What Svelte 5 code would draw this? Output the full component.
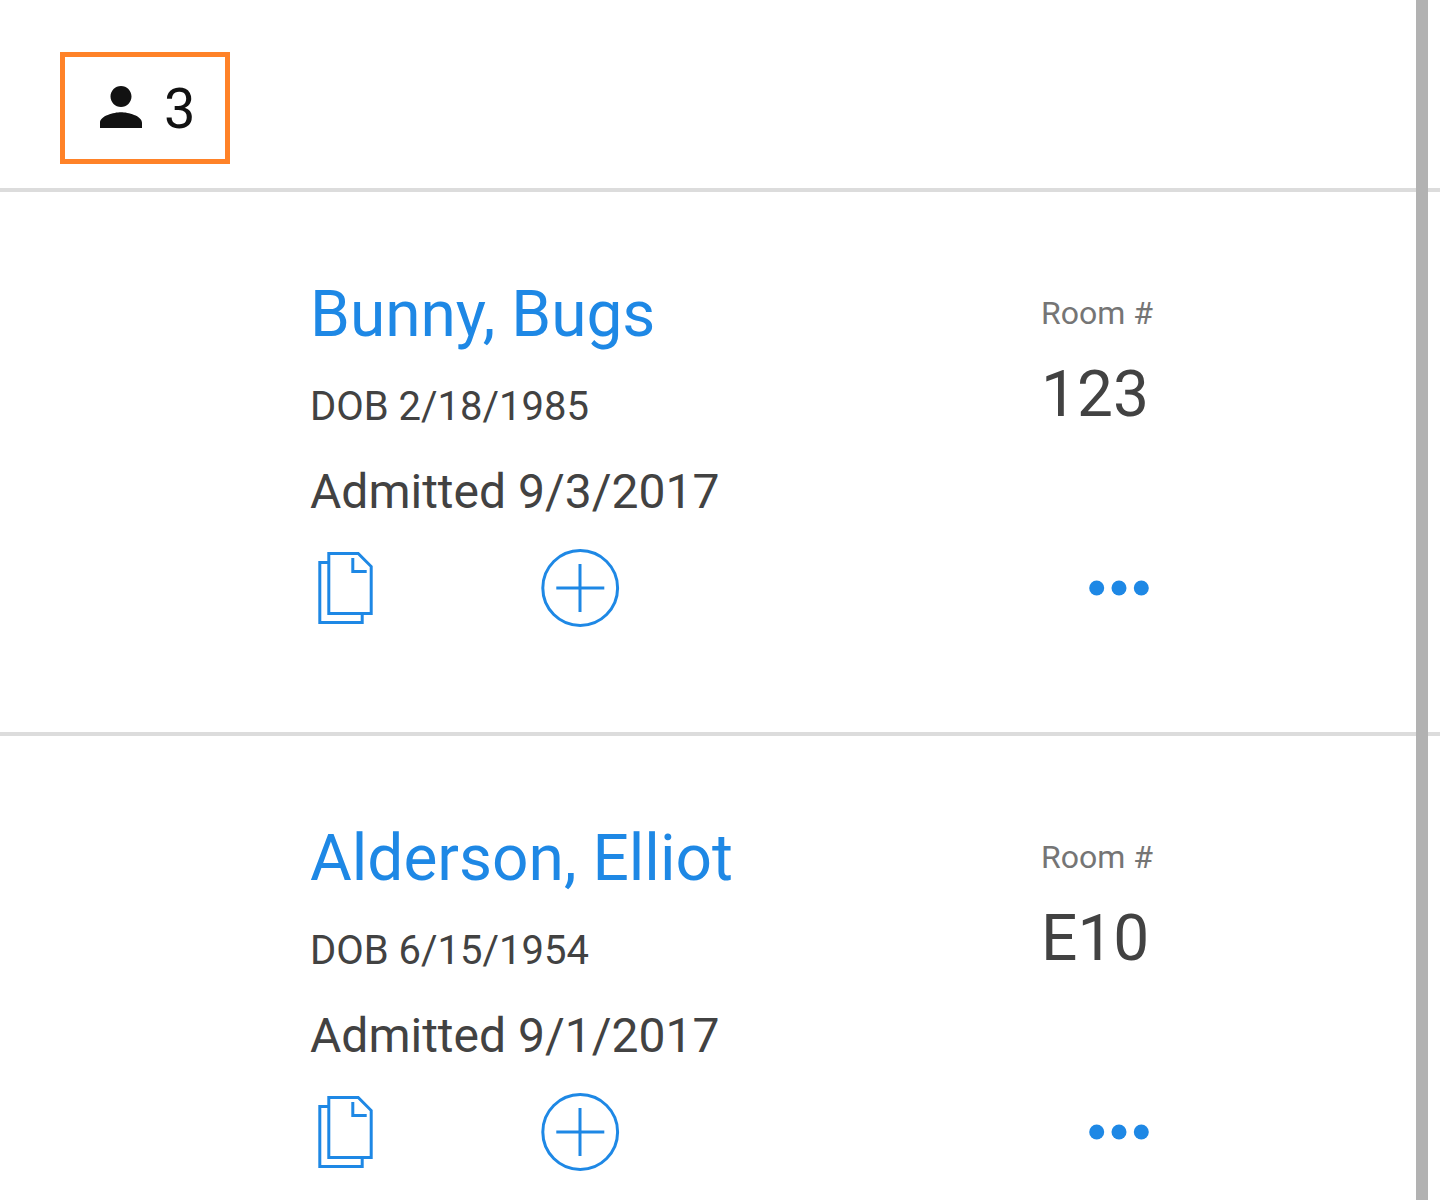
<script lang="ts">
	type Patient = {
		id: number;
		name: string;
		dob: string;
		admitted: string;
		room: string;
	};

	const patients: Patient[] = [
		{ id: 1, name: 'Bunny, Bugs', dob: '2/18/1985', admitted: '9/3/2017', room: '123' },
		{ id: 2, name: 'Alderson, Elliot', dob: '6/15/1954', admitted: '9/1/2017', room: 'E10' }
	];

	const patientCount = 3;
</script>

<main class="screen">
	<header class="toolbar">
		<button class="count" aria-label="Patients">
			<svg class="person" viewBox="4 4 16 16" aria-hidden="true">
				<path
					d="M12 12c2.21 0 4-1.79 4-4s-1.79-4-4-4-4 1.79-4 4 1.79 4 4 4zm0 2c-2.67 0-8 1.34-8 4v2h16v-2c0-2.66-5.33-4-8-4z"
				/>
			</svg>
			<span>{patientCount}</span>
		</button>
	</header>

	<ul class="patients">
		{#each patients as patient (patient.id)}
			<li class="patient">
				<div class="summary">
					<div class="details">
						<a class="name" href={`#patient-${patient.id}`}>{patient.name}</a>
						<p class="dob">DOB {patient.dob}</p>
						<p class="admitted">Admitted {patient.admitted}</p>
					</div>
					<dl class="room">
						<dt>Room #</dt>
						<dd>{patient.room}</dd>
					</dl>
				</div>

				<div class="actions">
					<button class="action" aria-label="Documents">
						<svg width="56" height="72" viewBox="0 0 56 72" aria-hidden="true">
							<path d="M10.8 10.5H1.8V70.4H44.2V61.5" />
							<path d="M10.8 1.5H40.2L53.2 14.5V61.5H10.8Z" />
							<path d="M34.8 6V19.5H48.7" />
						</svg>
					</button>
					<button class="action add" aria-label="Add">
						<svg width="80" height="80" viewBox="0 0 80 80" aria-hidden="true">
							<circle cx="40.2" cy="40" r="37.4" />
							<path d="M40 16V64M16.3 40H64.3" />
						</svg>
					</button>
					<button class="action more" aria-label="More">
						<svg width="62" height="16" viewBox="0 0 62 16" aria-hidden="true">
							<circle cx="8.7" cy="8" r="7.5" />
							<circle cx="31" cy="8" r="7.5" />
							<circle cx="53.3" cy="8" r="7.5" />
						</svg>
					</button>
				</div>
			</li>
		{/each}
	</ul>
</main>
<div class="scroll-thumb"></div>

<style>
	:global(body) {
		margin: 0;
		background: #fff;
		color: #424242;
		font-family: Roboto, 'Liberation Sans', sans-serif;
	}

	.screen {
		height: 100vh;
		overflow-y: auto;
		scrollbar-width: none;
	}

	button {
		border: none;
		background: none;
		padding: 0;
		font: inherit;
		cursor: pointer;
	}

	svg {
		display: block;
	}

	.toolbar {
		display: flex;
		padding: 52px 60px 24px;
		border-bottom: 4px solid #dcdcdc;
	}

	.count {
		display: flex;
		align-items: center;
		gap: 22px;
		padding: 18px 30px 16px 35px;
		border: 5px solid #ff8228;
		color: #121212;
		font-size: 56px;
		line-height: 68px;
	}

	.person {
		width: 42px;
		height: 42px;
		margin-bottom: 4px;
		fill: currentColor;
	}

	.patients {
		margin: 0;
		padding: 0;
		list-style: none;
	}

	.patient {
		padding: 83px 280px 101px 310px;
		border-bottom: 4px solid #dcdcdc;
	}

	.summary {
		display: flex;
		justify-content: space-between;
	}

	.details {
		display: flex;
		flex-direction: column;
		align-items: flex-start;
		gap: 20px;
	}

	.name {
		color: #1e88e5;
		font-size: 64px;
		line-height: 80px;
		text-decoration: none;
	}

	.details p {
		margin: 0;
	}

	.dob {
		font-size: 40px;
		line-height: 64px;
	}

	.admitted {
		font-size: 48px;
		line-height: 66px;
	}

	.room {
		display: flex;
		flex-direction: column;
		gap: 22px;
		width: 119px;
		margin: 0;
		padding-top: 18px;
		white-space: nowrap;
	}

	.room dt {
		color: #757575;
		font-size: 32px;
		line-height: 40px;
	}

	.room dd {
		margin: 0;
		font-size: 64px;
		line-height: 80px;
	}

	.actions {
		display: flex;
		align-items: center;
		height: 86px;
		margin-top: 20px;
	}

	.action {
		padding: 0 8px;
	}

	.action svg {
		fill: none;
		stroke: #1e88e5;
		stroke-width: 3;
	}

	.add {
		margin-left: 150px;
	}

	.more {
		margin-left: auto;
		padding: 0 10px;
	}

	.more svg {
		fill: #1e88e5;
		stroke: none;
	}

	.scroll-thumb {
		position: fixed;
		top: 0;
		right: 12px;
		bottom: 0;
		width: 12px;
		background: #b2b2b2;
	}
</style>
